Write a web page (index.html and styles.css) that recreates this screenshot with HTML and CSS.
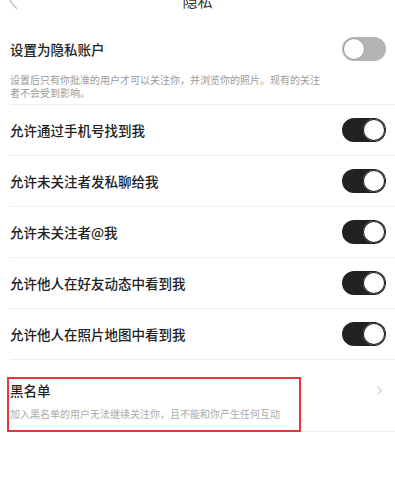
FILE: index.html
```html
<!DOCTYPE html>
<html lang="zh-CN">
<head>
<meta charset="utf-8">
<title>隐私</title>
<link rel="stylesheet" href="styles.css">
</head>
<body>
<header class="nav">
  <svg class="back" width="12" height="18" viewBox="0 0 12 18"><polyline points="9,1 2,9 9,17" fill="none" stroke="#c4c4c4" stroke-width="1.5"/></svg>
  <h1 class="title">隐私</h1>
  <span></span>
</header>
<main class="list">
  <section class="item item-first">
    <div class="row">
      <span class="label">设置为隐私账户</span>
      <span class="switch"></span>
    </div>
    <p class="desc">设置后只有你批准的用户才可以关注你，并浏览你的照片。现有的关注者不会受到影响。</p>
  </section>
  <section class="item item-toggle">
    <span class="label">允许通过手机号找到我</span>
    <span class="switch on"></span>
  </section>
  <section class="item item-toggle">
    <span class="label">允许未关注者发私聊给我</span>
    <span class="switch on"></span>
  </section>
  <section class="item item-toggle">
    <span class="label">允许未关注者@我</span>
    <span class="switch on"></span>
  </section>
  <section class="item item-toggle">
    <span class="label">允许他人在好友动态中看到我</span>
    <span class="switch on"></span>
  </section>
  <section class="item item-toggle">
    <span class="label">允许他人在照片地图中看到我</span>
    <span class="switch on"></span>
  </section>
  <section class="item item-link">
    <div class="link-text">
      <span class="label label-tight">黑名单</span>
      <p class="desc desc-light">加入黑名单的用户无法继续关注你，且不能和你产生任何互动</p>
    </div>
    <svg class="chev" width="7" height="11" viewBox="0 0 7 11"><polyline points="1.5,1.5 5.5,5.5 1.5,9.5" fill="none" stroke="#cfcfcf" stroke-width="1.3"/></svg>
    <span class="highlight"></span>
  </section>
</main>
</body>
</html>
```
FILE: styles.css
```css
* { box-sizing: border-box; }
html, body {
  margin: 0;
  padding: 0;
  background: #fff;
  font-family: "Noto Sans CJK SC", "Noto Sans", sans-serif;
  color: #222;
}
.nav {
  display: grid;
  grid-template-columns: 40px 1fr 40px;
  align-items: center;
  height: 30px;
  margin-top: -14px;
}
.back { margin-left: 8px; display: block; }
.title {
  margin: 0;
  text-align: center;
  font-size: 15px;
  font-weight: 400;
  line-height: 30px;
  color: #333;
}
.list { margin: 0; }
.item {
  margin-left: 10px;
  border-bottom: 1px solid #ededed;
  position: relative;
}
.item-first {
  padding: 21px 9px 5px 0;
}
.row {
  display: flex;
  align-items: center;
  justify-content: space-between;
  height: 24px;
}
.label {
  font-size: 13.5px;
  font-weight: 500;
  line-height: 18px;
  color: #222;
}
.desc {
  margin: 12px 0 0;
  max-width: 316px;
  font-size: 10px;
  line-height: 13px;
  color: #9a9a9a;
}
.item-toggle {
  display: flex;
  align-items: center;
  justify-content: space-between;
  height: 51px;
  padding-right: 9px;
}
.switch {
  position: relative;
  width: 44px;
  height: 24px;
  border-radius: 12px;
  background: #b4b4b4;
  flex: none;
}
.switch::after {
  content: "";
  position: absolute;
  top: 1px;
  left: 1px;
  width: 22px;
  height: 22px;
  border-radius: 50%;
  background: #fff;
  box-shadow: 0 0 0 1px #9a9a9a inset;
}
.switch.on { background: #222; }
.switch.on::after {
  left: 21px;
  box-shadow: 0 0 0 1px #222 inset;
}
.item-link {
  display: flex;
  align-items: flex-start;
  justify-content: space-between;
  padding: 21px 9px 10px 0;
  height: 72px;
}
.link-text { display: flex; flex-direction: column; }
.label-tight { line-height: 18px; }
.desc-light { margin-top: 8px; color: #ababab; max-width: none; }
.chev { margin-top: 4px; margin-right: 3px; display: block; }
.highlight {
  position: absolute;
  left: -3px;
  top: 17px;
  width: 294px;
  height: 55px;
  border: 2px solid #e8373a;
}
```
